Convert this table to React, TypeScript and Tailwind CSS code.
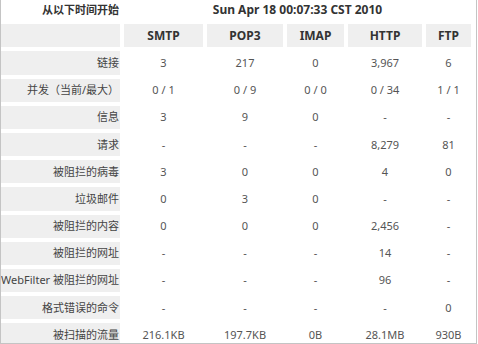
const HEADS = ["SMTP", "POP3", "IMAP", "HTTP", "FTP"];

const ROWS: [string, string[]][] = [
  ["链接", ["3", "217", "0", "3,967", "6"]],
  ["并发（当前/最大）", ["0 / 1", "0 / 9", "0 / 0", "0 / 34", "1 / 1"]],
  ["信息", ["3", "9", "0", "-", "-"]],
  ["请求", ["-", "-", "-", "8,279", "81"]],
  ["被阻拦的病毒", ["3", "0", "0", "4", "0"]],
  ["垃圾邮件", ["0", "3", "0", "-", "-"]],
  ["被阻拦的内容", ["0", "0", "0", "2,456", "-"]],
  ["被阻拦的网址", ["-", "-", "-", "14", "-"]],
  ["WebFilter 被阻拦的网址", ["-", "-", "-", "96", "-"]],
  ["格式错误的命令", ["-", "-", "-", "-", "0"]],
  ["被扫描的流量", ["216.1KB", "197.7KB", "0B", "28.1MB", "930B"]],
];

export default function App() {
  return (
    <div
      className="w-[477px] h-[344px] overflow-hidden bg-white border-x border-b border-[#c4c4c4] text-[11px] leading-[14px] text-[#555]"
      style={{ fontFamily: '"Noto Sans", "Noto Sans CJK SC", sans-serif' }}
    >
      <div className="grid grid-cols-[119px_79px_76px_57px_74px_45px] grid-rows-[20px_23.4px_repeat(11,23.2px)] gap-[4px]">
        <div className="flex items-center justify-end pr-[1px] font-bold text-[#333] whitespace-nowrap">
          从以下时间开始
        </div>
        <div className="col-span-5 flex items-center justify-center font-bold text-[12px] text-[#333]">
          Sun Apr 18 00:07:33 CST 2010
        </div>

        <div className="bg-[#efefef]" />
        {HEADS.map((h) => (
          <div key={h} className="bg-[#efefef] flex items-center justify-center font-bold text-[12px] text-[#333]">
            {h}
          </div>
        ))}

        {ROWS.map(([label, vals]) => (
          <div key={label} className="contents">
            <div className="bg-[#efefef] flex items-center justify-end pr-[1px] text-[#444] whitespace-nowrap">
              {label}
            </div>
            {vals.map((v, i) => (
              <div key={i} className="flex items-center justify-center">
                {v}
              </div>
            ))}
          </div>
        ))}
      </div>
    </div>
  );
}
